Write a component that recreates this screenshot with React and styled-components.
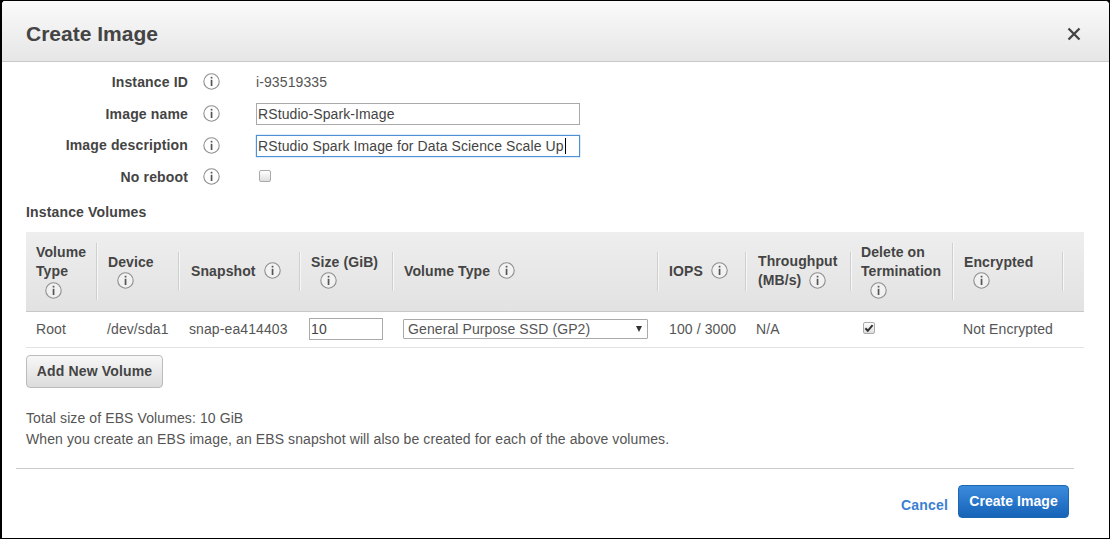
import React from "react";
import styled, { createGlobalStyle } from "styled-components";

const volumeColumns = "71px 82px 121px 93px 265px 88px 105px 102px 110px 21px";

const headers = [
  { lines: ["Volume", "Type"], info: "below", indent: 10, tall: true },
  { lines: ["Device"], info: "below", indent: 11 },
  { lines: ["Snapshot"], info: "inline", indent: 12 },
  { lines: ["Size (GiB)"], info: "below", indent: 11 },
  { lines: ["Volume Type"], info: "inline", indent: 11 },
  { lines: ["IOPS"], info: "inline", indent: 11 },
  { lines: ["Throughput", "(MB/s)"], info: "inline", indent: 12 },
  { lines: ["Delete on", "Termination"], info: "below", indent: 10, tall: true },
  { lines: ["Encrypted"], info: "below", indent: 11 },
];

function InfoIcon() {
  return (
    <InfoSvg viewBox="0 0 17 17">
      <circle cx="8.5" cy="8.5" r="7.7" fill="#fff" fillOpacity="0.45" stroke="#8f8f8f" strokeWidth="1.1" />
      <rect x="7.7" y="3.8" width="1.7" height="1.7" fill="#555" />
      <rect x="7.7" y="6.8" width="1.7" height="6.2" fill="#555" />
    </InfoSvg>
  );
}

function FormRow({ label, children }) {
  return (
    <Row>
      <RowLabel>{label}</RowLabel>
      <InfoIcon />
      <RowValue>{children}</RowValue>
    </Row>
  );
}

function HeaderCell({ lines, info, indent, tall }) {
  return (
    <HeadCell $indent={indent} $tall={tall}>
      <HeadInner>
        {lines.map((line, i) => (
          <HeadLine key={line}>
            {line}
            {info === "inline" && i === lines.length - 1 && <InfoIcon />}
          </HeadLine>
        ))}
        {info === "below" && (
          <HeadIcon>
            <InfoIcon />
          </HeadIcon>
        )}
      </HeadInner>
    </HeadCell>
  );
}

export default function App() {
  return (
    <>
      <GlobalStyle />
      <Frame>
        <Header>
          <Title>Create Image</Title>
          <CloseIcon viewBox="0 0 14 14">
            <path d="M1.5 1.5 L12.5 12.5 M12.5 1.5 L1.5 12.5" stroke="#444" strokeWidth="2.3" />
          </CloseIcon>
        </Header>

        <Form>
          <FormRow label="Instance ID">
            <PlainText>i-93519335</PlainText>
          </FormRow>
          <FormRow label="Image name">
            <TextField>RStudio-Spark-Image</TextField>
          </FormRow>
          <FormRow label="Image description">
            <TextField $focused>RStudio Spark Image for Data Science Scale Up</TextField>
          </FormRow>
          <FormRow label="No reboot">
            <CheckBox />
          </FormRow>
        </Form>

        <SectionTitle>Instance Volumes</SectionTitle>

        <VolumeTable>
          <HeadRow>
            {headers.map((h) => (
              <HeaderCell key={h.lines.join(" ")} {...h} />
            ))}
            <span />
          </HeadRow>
          <BodyRow>
            <BodyCell $indent={10}>Root</BodyCell>
            <BodyCell $indent={10}>/dev/sda1</BodyCell>
            <BodyCell $indent={10}>snap-ea414403</BodyCell>
            <BodyCell $indent={9}>
              <SizeField>10</SizeField>
            </BodyCell>
            <BodyCell $indent={10}>
              <SelectBox>
                General Purpose SSD (GP2)
                <SelectArrow />
              </SelectBox>
            </BodyCell>
            <BodyCell $indent={11}>100 / 3000</BodyCell>
            <BodyCell $indent={10}>N/A</BodyCell>
            <BodyCell $indent={12}>
              <CheckBox $checked>
                <svg viewBox="0 0 12 12" width="12" height="12">
                  <path d="M2.4 6.2 L4.8 8.8 L9.6 3.2" fill="none" stroke="#333" strokeWidth="2" />
                </svg>
              </CheckBox>
            </BodyCell>
            <BodyCell $indent={10}>Not Encrypted</BodyCell>
            <span />
          </BodyRow>
        </VolumeTable>

        <AddButton>Add New Volume</AddButton>

        <Notes>
          <div>Total size of EBS Volumes: 10 GiB</div>
          <div>When you create an EBS image, an EBS snapshot will also be created for each of the above volumes.</div>
        </Notes>

        <Footer>
          <CancelLink>Cancel</CancelLink>
          <PrimaryButton>Create Image</PrimaryButton>
        </Footer>
      </Frame>
    </>
  );
}

const GlobalStyle = createGlobalStyle`
  html, body {
    margin: 0;
    padding: 0;
    background: #000;
  }
  * {
    box-sizing: border-box;
  }
`;

const Frame = styled.div`
  width: 1110px;
  height: 539px;
  background: #fff;
  border: 1px solid #000;
  border-left-width: 2px;
  border-radius: 5px 5px 0 0;
  overflow: hidden;
  font-family: "Liberation Sans", Arial, sans-serif;
  font-size: 14px;
  letter-spacing: 0.1px;
  color: #444;
`;

const Header = styled.div`
  height: 61px;
  display: flex;
  align-items: center;
  justify-content: space-between;
  padding: 6px 28px 0 24px;
  background: linear-gradient(#fafafa, #e6e6e6);
  border-bottom: 1px solid #c8c8c8;
`;

const Title = styled.div`
  font-size: 21px;
  font-weight: 700;
  letter-spacing: 0;
  color: #444;
`;

const CloseIcon = styled.svg`
  width: 14px;
  height: 14px;
`;

const InfoSvg = styled.svg`
  width: 17px;
  height: 17px;
  flex: none;
`;

const Form = styled.div`
  padding-top: 4px;
  display: flex;
  flex-direction: column;
`;

const Row = styled.div`
  display: flex;
  align-items: center;
  height: 31.7px;
`;

const RowLabel = styled.div`
  width: 186px;
  margin-right: 15px;
  text-align: right;
  font-weight: 700;
  color: #444;
  letter-spacing: 0.15px;
`;

const RowValue = styled.div`
  margin-left: 36px;
  display: flex;
  align-items: center;
`;

const PlainText = styled.div`
  color: #555;
`;

const TextField = styled.div`
  width: 324px;
  height: 22px;
  margin-top: ${(p) => (p.$focused ? "2px" : "0")};
  line-height: 20px;
  padding-left: 1px;
  white-space: nowrap;
  color: #444;
  border: 1px solid ${(p) => (p.$focused ? "#4d90d8" : "#aaa")};
  box-shadow: ${(p) => (p.$focused ? "0 0 1px #4d90d8" : "none")};
  ${(p) =>
    p.$focused &&
    `
    &::after {
      content: "";
      display: inline-block;
      width: 1px;
      height: 16px;
      margin-left: 1px;
      vertical-align: -3px;
      background: #000;
    }
  `}
`;

const CheckBox = styled.div`
  width: 12px;
  height: 12px;
  margin: ${(p) => (p.$checked ? "0 0 3px 0" : "0 0 1px 3px")};
  border: 1px solid #aaa;
  border-radius: 2px;
  background: linear-gradient(#fff, #dedede);
  display: flex;
  align-items: center;
  justify-content: center;
  svg {
    flex: none;
  }
`;

const SectionTitle = styled.div`
  margin: 11px 0 0 24px;
  height: 16px;
  font-weight: 700;
  line-height: 16px;
  letter-spacing: 0.15px;
  color: #444;
`;

const VolumeTable = styled.div`
  margin: 12px 0 0 24px;
  width: 1058px;
`;

const HeadRow = styled.div`
  display: grid;
  grid-template-columns: ${volumeColumns};
  height: 80px;
  background: linear-gradient(#eeeeee, #e2e2e2);
  border-bottom: 1px solid #c8c8c8;
`;

const HeadCell = styled.div`
  display: flex;
  align-items: center;
  padding-left: ${(p) => p.$indent}px;
  position: relative;
  font-weight: 700;
  letter-spacing: 0.1px;
  color: #444;
  &::after {
    content: "";
    position: absolute;
    right: 0;
    top: ${(p) => (p.$tall ? 11 : 20)}px;
    bottom: ${(p) => (p.$tall ? 11 : 20)}px;
    width: 1px;
    background: #cfcfcf;
    box-shadow: 1px 0 0 #f7f7f7;
  }
`;

const HeadInner = styled.div`
  display: flex;
  flex-direction: column;
  margin-top: -1px;
`;

const HeadLine = styled.div`
  display: flex;
  align-items: center;
  gap: 8px;
  height: 19px;
  white-space: nowrap;
`;

const HeadIcon = styled.div`
  display: flex;
  padding: 1px 0 0 9px;
`;

const BodyRow = styled.div`
  display: grid;
  grid-template-columns: ${volumeColumns};
  height: 36px;
  border-bottom: 1px solid #e2e2e2;
  align-items: center;
`;

const BodyCell = styled.div`
  padding-left: ${(p) => p.$indent}px;
  color: #555;
  white-space: nowrap;
`;

const SizeField = styled.div`
  width: 74px;
  height: 22px;
  line-height: 20px;
  padding-left: 1px;
  border: 1px solid #aaa;
  color: #444;
`;

const SelectBox = styled.div`
  position: relative;
  width: 245px;
  height: 20px;
  line-height: 18px;
  padding-left: 4px;
  border: 1px solid #aaa;
  border-radius: 1px;
  color: #555;
`;

const SelectArrow = styled.span`
  position: absolute;
  right: 5px;
  top: 6px;
  border-left: 3.5px solid transparent;
  border-right: 3.5px solid transparent;
  border-top: 6px solid #333;
`;

const AddButton = styled.div`
  margin: 7px 0 0 24px;
  width: 137px;
  height: 33px;
  display: flex;
  align-items: center;
  justify-content: center;
  font-weight: 700;
  letter-spacing: 0.15px;
  color: #444;
  border: 1px solid #bcbcbc;
  border-radius: 4px;
  background: linear-gradient(#f7f7f7, #dcdcdc);
`;

const Notes = styled.div`
  margin: 20px 0 0 24px;
  line-height: 21px;
  color: #555;
`;

const Footer = styled.div`
  margin: 18px 0 0 14px;
  width: 1058px;
  border-top: 1px solid #ccc;
  padding: 16px 5px 0 0;
  display: flex;
  justify-content: flex-end;
  gap: 10px;
`;

const CancelLink = styled.div`
  align-self: flex-end;
  margin-bottom: 5px;
  font-weight: 700;
  letter-spacing: 0.2px;
  color: #3b7fd1;
`;

const PrimaryButton = styled.div`
  width: 111px;
  height: 33px;
  display: flex;
  align-items: center;
  justify-content: center;
  font-weight: 700;
  letter-spacing: 0.05px;
  color: #fff;
  border: 1px solid #1d66b0;
  border-radius: 4px;
  background: linear-gradient(#3b8bdd, #1663b8);
`;
